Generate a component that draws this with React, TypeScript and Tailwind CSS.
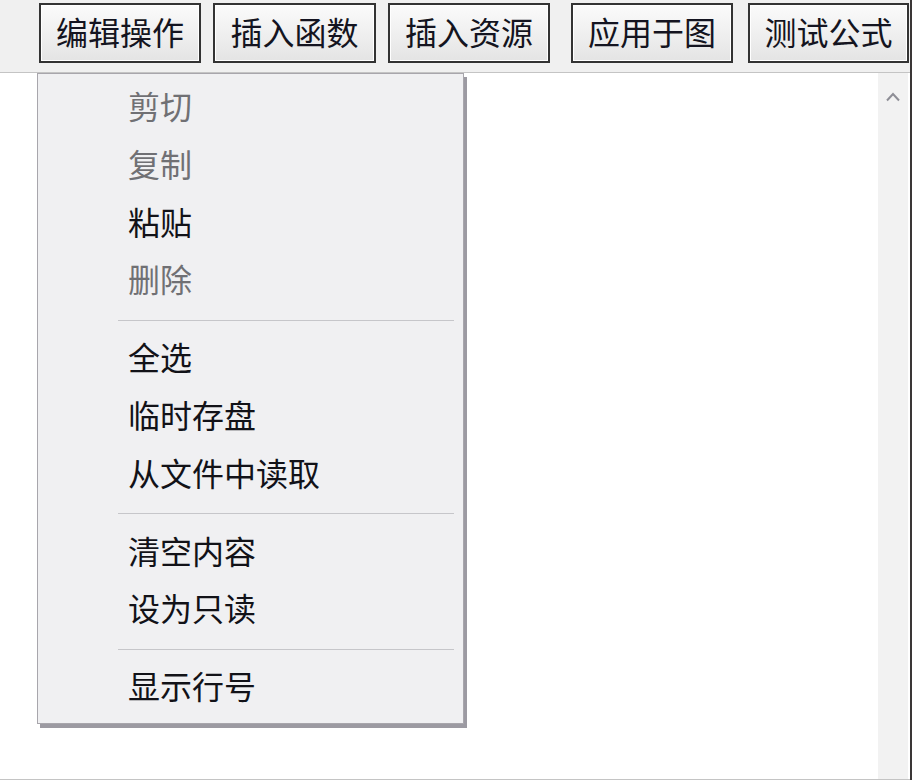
const buttons = [
  { label: "编辑操作", cls: "ml-[39px] w-[162px]" },
  { label: "插入函数", cls: "ml-[12px] w-[163px]" },
  { label: "插入资源", cls: "ml-[12px] w-[162px]" },
  { label: "应用于图", cls: "ml-[21px] w-[162px]" },
  { label: "测试公式", cls: "ml-[15px] w-[161px]" },
]

type Entry = { label: string; disabled?: boolean } | "sep"

const menu: Entry[] = [
  { label: "剪切", disabled: true },
  { label: "复制", disabled: true },
  { label: "粘贴" },
  { label: "删除", disabled: true },
  "sep",
  { label: "全选" },
  { label: "临时存盘" },
  { label: "从文件中读取" },
  "sep",
  { label: "清空内容" },
  { label: "设为只读" },
  "sep",
  { label: "显示行号" },
]

export default function App() {
  return (
    <div
      className="relative flex h-[780px] w-[912px] flex-col overflow-hidden border-r-2 border-[#3a3636] bg-[#f0f0f0]"
      style={{ fontFamily: '"Noto Sans CJK SC", "Noto Sans", sans-serif' }}
    >
      {/* toolbar */}
      <div className="flex h-[72px] items-start pt-[3px]">
        {buttons.map((b) => (
          <button
            key={b.label}
            className={`${b.cls} flex h-[60px] shrink-0 items-center justify-center border-2 border-[#333333] bg-gradient-to-b from-[#fbfbfb] to-[#e4e4e4] pb-[5px] text-[32px] leading-none text-[#141420] shadow-[inset_0_0_0_1px_#ffffff]`}
          >
            {b.label}
          </button>
        ))}
      </div>

      {/* text area */}
      <div className="flex flex-1 border-t border-b border-[#c4c4c4] bg-white">
        <div className="flex-1" />
        <div className="mr-[2px] flex w-[30px] flex-col items-center bg-[#f2f2f2] pt-[19px]">
          <svg width="14" height="10" viewBox="0 0 14 10" fill="none" stroke="#8e8e96" strokeWidth="2">
            <path d="M1 8.5 7 2l6 6.5" />
          </svg>
        </div>
      </div>

      {/* context menu */}
      <div className="absolute left-[37px] top-[73px] flex h-[651px] w-[427px] flex-col border border-[#a8a6ac] bg-[#f0f0f2] pt-[5px] pb-[6px] shadow-[3px_4px_0_#9c9aa2]">
        {menu.map((m, i) =>
          m === "sep" ? (
            <div key={i} className="flex h-[20px] items-center pl-[80px] pr-[9px]">
              <div className="h-px w-full bg-[#c6c6ca]" />
            </div>
          ) : (
            <div
              key={i}
              className={`flex h-[58px] items-center pb-[6px] pl-[90px] text-[32px] leading-none ${
                m.disabled ? "text-[#707074]" : "text-[#121218]"
              }`}
            >
              {m.label}
            </div>
          )
        )}
      </div>
    </div>
  )
}
